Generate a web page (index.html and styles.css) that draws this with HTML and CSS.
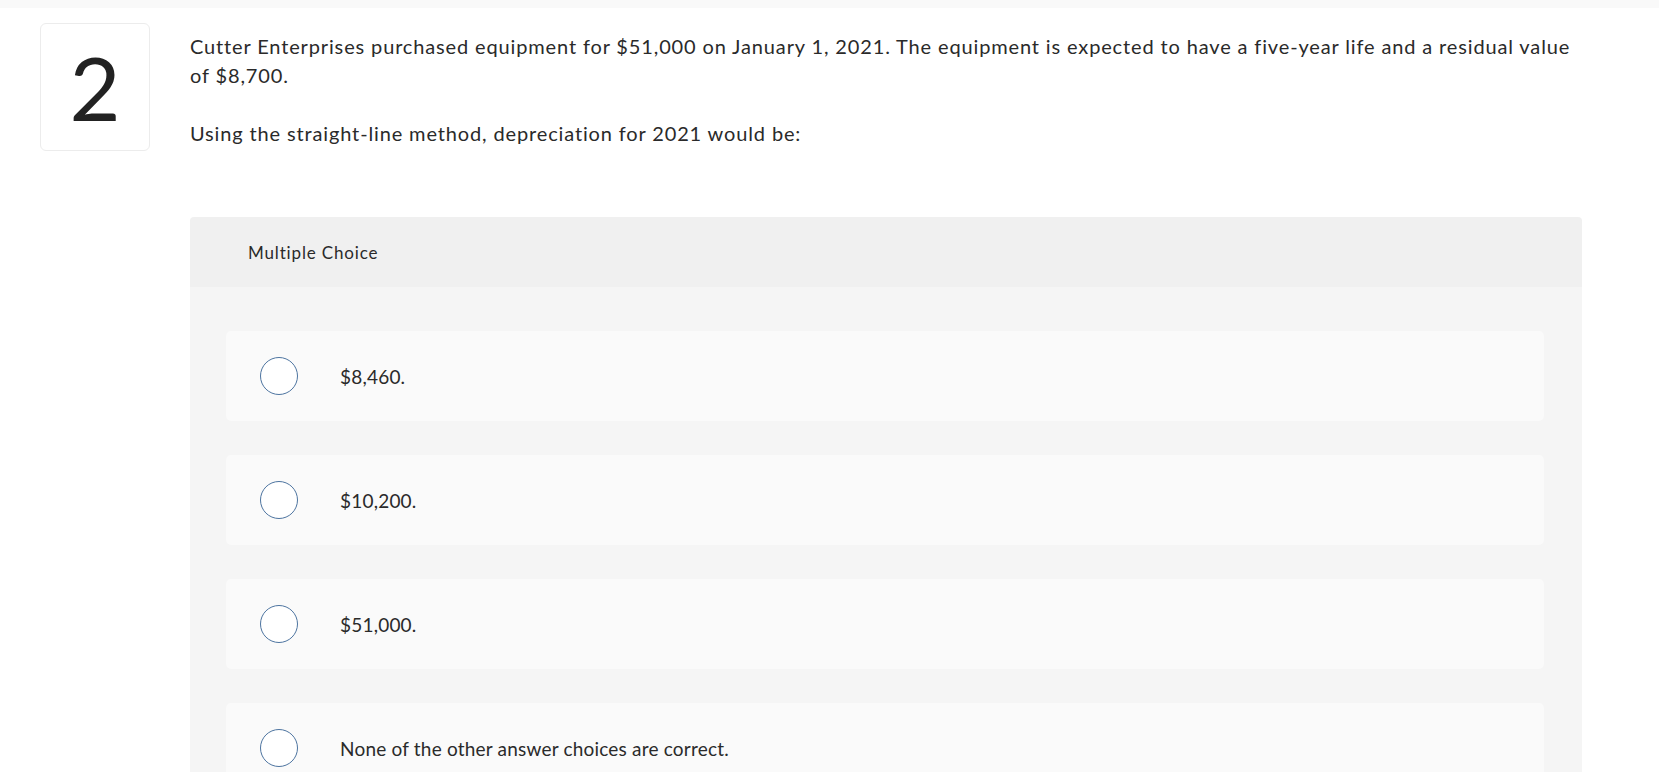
FILE: index.html
```html
<!DOCTYPE html>
<html lang="en">
<head>
<meta charset="utf-8">
<title>Question 2</title>
<link rel="stylesheet" href="styles.css">
</head>
<body>
<div class="topbar"></div>
<main class="viewport">
  <section class="question">
    <div class="qnum">2</div>
    <div class="qbody">
      <div class="prompt">
        <p>Cutter Enterprises purchased equipment for $51,000 on January 1, 2021. The equipment is expected to have a five-year life and a residual value of $8,700.</p>
        <p>Using the straight-line method, depreciation for 2021 would be:</p>
      </div>
      <div class="mc">
        <div class="mc-head">Multiple Choice</div>
        <div class="mc-body">
          <label class="choice"><span class="radio"></span><span class="ctext">$8,460.</span></label>
          <label class="choice"><span class="radio"></span><span class="ctext">$10,200.</span></label>
          <label class="choice"><span class="radio"></span><span class="ctext">$51,000.</span></label>
          <label class="choice"><span class="radio"></span><span class="ctext">None of the other answer choices are correct.</span></label>
        </div>
      </div>
    </div>
  </section>
</main>
</body>
</html>
```

FILE: styles.css
```css
* { box-sizing: border-box; }
html, body { margin: 0; padding: 0; background: #ffffff; }
body {
  font-family: "Lato", "Open Sans", sans-serif;
  color: #2a2a2a;
  width: 1659px;
  height: 781px;
  overflow: hidden;
}
.topbar {
  height: 8px;
  background: #f9f9f9;
}
.viewport {
  height: 764px;
  overflow: hidden;
}
.question {
  display: flex;
  align-items: flex-start;
  padding-top: 15px;
  padding-left: 40px;
  gap: 40px;
}
.qnum {
  flex: 0 0 110px;
  height: 128px;
  border: 1px solid #ececec;
  border-radius: 6px;
  display: flex;
  align-items: center;
  justify-content: center;
  font-size: 88px;
  font-weight: 400;
  color: #222;
  line-height: 1;
}
.qbody {
  width: 1392px;
  padding-top: 9px;
}
.prompt p {
  margin: 0 0 29px 0;
  font-size: 20px;
  line-height: 29px;
  letter-spacing: 0.86px;
}
.prompt p:last-child { margin-bottom: 0; }
.mc {
  margin-top: 69px;
  border-radius: 4px 4px 0 0;
  overflow: hidden;
}
.mc-head {
  height: 70px;
  background: #f0f0f0;
  display: flex;
  align-items: center;
  padding-left: 58px;
  font-size: 17px;
  letter-spacing: 0.85px;
}
.mc-body {
  background: #f5f5f5;
  padding: 44px 38px 40px 36px;
  display: flex;
  flex-direction: column;
  gap: 34px;
}
.choice {
  height: 90px;
  background: #fafafa;
  border-radius: 5px;
  display: flex;
  align-items: center;
  padding-left: 34px;
}
.radio {
  width: 38px;
  height: 38px;
  border-radius: 50%;
  border: 1.6px solid #4d74a0;
  background: #ffffff;
  flex: 0 0 38px;
}
.ctext {
  margin-left: 42px;
  font-size: 19px;
  letter-spacing: 0.2px;
}
```
